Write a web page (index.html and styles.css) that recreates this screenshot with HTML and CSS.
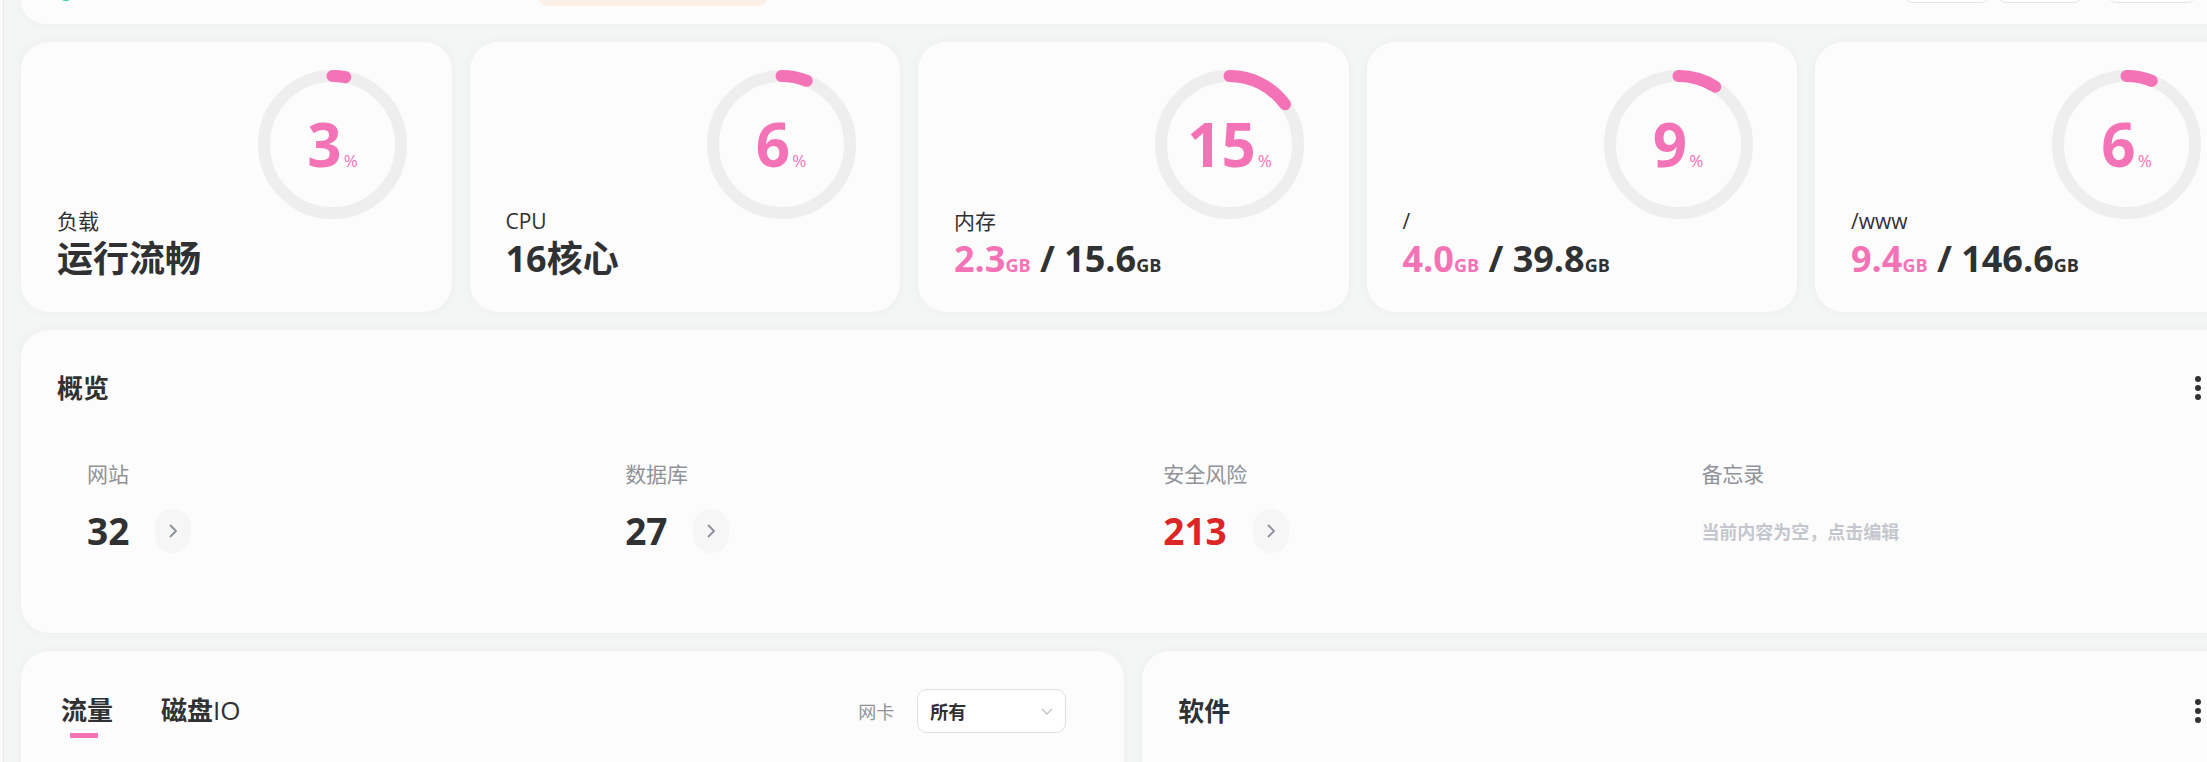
FILE: index.html
```html
<!DOCTYPE html>
<html lang="zh-CN">
<head>
  <meta charset="UTF-8">
  <meta name="viewport" content="width=device-width, initial-scale=1.0">
  <title>首页</title>
  <link rel="stylesheet" href="styles.css">
</head>
<body>
  <div class="side"></div>
  <main class="page">
    <header class="card topbar">
      <span class="logo-dot"></span>
      <span class="notice"></span>
      <div class="top-actions">
        <span class="top-btn"></span>
        <span class="top-btn"></span>
        <span class="top-btn wide"></span>
      </div>
    </header>

    <section class="stats">
      <div class="card stat-card">
        <div class="ring">
          <svg viewBox="0 0 149 149" width="149" height="149">
            <circle class="ring-track" cx="74.5" cy="74.5" r="68.5"/>
            <circle class="ring-bar" cx="74.5" cy="74.5" r="68.5" stroke-dasharray="12.91 430.4" transform="rotate(-90 74.5 74.5)"/>
          </svg>
          <div class="ring-value">3<small>%</small></div>
        </div>
        <div class="stat-label">负载</div>
        <div class="stat-value">运行流畅</div>
      </div>
      <div class="card stat-card">
        <div class="ring">
          <svg viewBox="0 0 149 149" width="149" height="149">
            <circle class="ring-track" cx="74.5" cy="74.5" r="68.5"/>
            <circle class="ring-bar" cx="74.5" cy="74.5" r="68.5" stroke-dasharray="25.82 430.4" transform="rotate(-90 74.5 74.5)"/>
          </svg>
          <div class="ring-value">6<small>%</small></div>
        </div>
        <div class="stat-label">CPU</div>
        <div class="stat-value">16核心</div>
      </div>
      <div class="card stat-card">
        <div class="ring">
          <svg viewBox="0 0 149 149" width="149" height="149">
            <circle class="ring-track" cx="74.5" cy="74.5" r="68.5"/>
            <circle class="ring-bar" cx="74.5" cy="74.5" r="68.5" stroke-dasharray="64.56 430.4" transform="rotate(-90 74.5 74.5)"/>
          </svg>
          <div class="ring-value">15<small>%</small></div>
        </div>
        <div class="stat-label">内存</div>
        <div class="stat-value"><span class="used">2.3<small>GB</small></span> / 15.6<small>GB</small></div>
      </div>
      <div class="card stat-card">
        <div class="ring">
          <svg viewBox="0 0 149 149" width="149" height="149">
            <circle class="ring-track" cx="74.5" cy="74.5" r="68.5"/>
            <circle class="ring-bar" cx="74.5" cy="74.5" r="68.5" stroke-dasharray="38.74 430.4" transform="rotate(-90 74.5 74.5)"/>
          </svg>
          <div class="ring-value">9<small>%</small></div>
        </div>
        <div class="stat-label">/</div>
        <div class="stat-value"><span class="used">4.0<small>GB</small></span> / 39.8<small>GB</small></div>
      </div>
      <div class="card stat-card">
        <div class="ring">
          <svg viewBox="0 0 149 149" width="149" height="149">
            <circle class="ring-track" cx="74.5" cy="74.5" r="68.5"/>
            <circle class="ring-bar" cx="74.5" cy="74.5" r="68.5" stroke-dasharray="25.82 430.4" transform="rotate(-90 74.5 74.5)"/>
          </svg>
          <div class="ring-value">6<small>%</small></div>
        </div>
        <div class="stat-label">/www</div>
        <div class="stat-value"><span class="used">9.4<small>GB</small></span> / 146.6<small>GB</small></div>
      </div>
    </section>

    <section class="card overview">
      <div class="panel-head">
        <h2>概览</h2>
        <button class="more" type="button">
          <svg width="24" height="24" viewBox="0 0 24 24"><circle cx="12" cy="3" r="3"/><circle cx="12" cy="12" r="3"/><circle cx="12" cy="21" r="3"/></svg>
        </button>
      </div>
      <div class="ov-grid">
        <div class="ov-item">
          <div class="ov-label">网站</div>
          <div class="ov-row">
            <span class="ov-num">32</span>
            <span class="ov-go"><svg width="10" height="16" viewBox="0 0 10 16"><path d="M2.5 2.5l5.5 5.5-5.5 5.5"/></svg></span>
          </div>
        </div>
        <div class="ov-item">
          <div class="ov-label">数据库</div>
          <div class="ov-row">
            <span class="ov-num">27</span>
            <span class="ov-go"><svg width="10" height="16" viewBox="0 0 10 16"><path d="M2.5 2.5l5.5 5.5-5.5 5.5"/></svg></span>
          </div>
        </div>
        <div class="ov-item">
          <div class="ov-label">安全风险</div>
          <div class="ov-row">
            <span class="ov-num danger">213</span>
            <span class="ov-go"><svg width="10" height="16" viewBox="0 0 10 16"><path d="M2.5 2.5l5.5 5.5-5.5 5.5"/></svg></span>
          </div>
        </div>
        <div class="ov-item">
          <div class="ov-label">备忘录</div>
          <div class="ov-row">
            <span class="memo-empty">当前内容为空，点击编辑</span>
          </div>
        </div>
      </div>
    </section>

    <section class="bottom">
      <div class="card panel-low">
        <div class="low-head">
          <div class="tabs">
            <div class="tab active"><span>流量</span></div>
            <div class="tab"><span>磁盘<span class="lat">IO</span></span></div>
          </div>
          <div class="net">
            <span class="net-label">网卡</span>
            <div class="select">
              <span>所有</span>
              <svg width="12" height="7" viewBox="0 0 12 7"><path d="M1 1l5 5 5-5"/></svg>
            </div>
          </div>
        </div>
      </div>
      <div class="card panel-low">
        <div class="low-head center">
          <h2>软件</h2>
          <button class="more" type="button">
            <svg width="24" height="24" viewBox="0 0 24 24"><circle cx="12" cy="3" r="3"/><circle cx="12" cy="12" r="3"/><circle cx="12" cy="21" r="3"/></svg>
          </button>
        </div>
      </div>
    </section>
  </main>
</body>
</html>
```

FILE: styles.css
```css
* {
  box-sizing: border-box;
  margin: 0;
  padding: 0;
}

body {
  font-family: "Open Sans", "Noto Sans CJK SC", sans-serif;
  background: #f4f5f5;
  color: #303133;
  display: flex;
  height: 762px;
  overflow: hidden;
}

.side {
  flex: none;
  width: 4px;
  background: #fbfbfb;
  border-right: 1px solid #e8e9ea;
}

.page {
  flex: none;
  width: 2258.5px;
  padding: 0 17px;
  display: flex;
  flex-direction: column;
  gap: 18px;
}

.page > * {
  flex-shrink: 0;
}

.card {
  background: #fcfcfc;
  border-radius: 28px;
  box-shadow: 0 0 12px rgba(0, 0, 0, 0.035);
}

/* top bar, mostly scrolled out of view */
.topbar {
  height: 24px;
  border-radius: 0 0 28px 28px;
  display: flex;
  align-items: flex-end;
  overflow: hidden;
}

.logo-dot {
  flex: none;
  width: 16px;
  height: 16px;
  margin: 0 0 23px 37px;
  border-radius: 50%;
  background: #3cc8a0;
}

.notice {
  flex: none;
  width: 228px;
  height: 36px;
  margin: 0 0 18px 465px;
  border-radius: 8px;
  background: #fdf0e6;
}

.top-actions {
  display: flex;
  gap: 7px;
  margin: 0 50px 21px auto;
}

.top-btn {
  width: 86px;
  height: 40px;
  border: 1px solid #e2e3eb;
  border-radius: 9px;
  background: #fff;
}

.top-btn.wide {
  width: 88px;
  margin-left: 18px;
}

/* stat cards */
.stats {
  display: grid;
  grid-template-columns: repeat(5, 1fr);
  gap: 18px;
}

.stat-card {
  height: 270px;
  padding: 27.5px 44.5px 30px 36px;
  display: flex;
  flex-direction: column;
}

.ring {
  align-self: flex-end;
  width: 149px;
  height: 149px;
  display: grid;
  place-items: center;
}

.ring svg, .ring-value {
  grid-area: 1 / 1;
}

.ring-track {
  fill: none;
  stroke: #eeeeee;
  stroke-width: 12;
}

.ring-bar {
  fill: none;
  stroke: #f472b6;
  stroke-width: 12;
  stroke-linecap: round;
}

.ring-value {
  color: #f472b6;
  font-size: 60px;
  font-weight: 700;
  line-height: 1;
}

.ring-value small {
  font-size: 17px;
  font-weight: 400;
  margin-left: 2px;
}

.stat-label {
  margin-top: -12px;
  font-size: 21px;
  line-height: 28px;
}

.stat-value {
  margin-top: 1px;
  font-size: 36px;
  font-weight: 700;
  line-height: 46px;
  white-space: nowrap;
}

.stat-value .used {
  color: #f472b6;
}

.stat-value small {
  font-size: 18px;
}

/* overview */
.overview {
  padding: 40px 36px 80px;
}

.panel-head {
  height: 36px;
  display: flex;
  align-items: center;
  justify-content: space-between;
}

h2 {
  font-size: 26px;
  font-weight: 700;
  line-height: 36px;
}

.more {
  width: 24px;
  height: 24px;
  border: none;
  background: none;
  fill: #303133;
  display: flex;
}

.ov-grid {
  display: grid;
  grid-template-columns: repeat(4, 1fr);
  margin-top: 54px;
}

.ov-item {
  padding-left: 30px;
}

.ov-label {
  font-size: 21px;
  line-height: 28px;
  color: #909399;
}

.ov-row {
  height: 44px;
  margin-top: 21px;
  display: flex;
  align-items: center;
  gap: 26px;
}

.ov-num {
  font-size: 37px;
  font-weight: 700;
  line-height: 44px;
}

.ov-num.danger {
  color: #dc2626;
}

.ov-go {
  width: 36px;
  height: 44px;
  border-radius: 18px;
  background: #f6f6f7;
  display: grid;
  place-items: center;
}

.ov-go path {
  fill: none;
  stroke: #8d9099;
  stroke-width: 1.8;
  stroke-linecap: round;
  stroke-linejoin: round;
}

.memo-empty {
  font-size: 18px;
  font-weight: 700;
  color: #c4c7ce;
}

/* bottom panels */
.bottom {
  display: grid;
  grid-template-columns: 1fr 1fr;
  gap: 18px;
}

.panel-low {
  height: 320px;
  padding: 38px 36px;
}

.low-head {
  height: 44px;
  display: flex;
  align-items: flex-start;
}

.low-head.center {
  align-items: center;
  justify-content: space-between;
}

.tabs {
  display: flex;
  gap: 48px;
  margin: 2.5px 0 0 4px;
}

.tab {
  font-size: 26px;
  font-weight: 700;
  line-height: 36px;
  display: flex;
  flex-direction: column;
}

.tab .lat {
  font-weight: 400;
}

.tab.active::after {
  content: "";
  width: 28px;
  height: 5px;
  margin: 5.5px 0 0 9px;
  background: #f472b6;
}

.net {
  margin: 0 22px 0 auto;
  height: 44px;
  display: flex;
  align-items: center;
  gap: 23px;
}

.net-label {
  font-size: 18px;
  color: #909399;
}

.select {
  width: 149px;
  height: 44px;
  padding: 0 12px;
  border: 1px solid #dcdfe6;
  border-radius: 10px;
  background: #fff;
  display: flex;
  align-items: center;
  justify-content: space-between;
  font-size: 18px;
  font-weight: 700;
}

.select path {
  fill: none;
  stroke: #b8bcc4;
  stroke-width: 1.2;
}
```
